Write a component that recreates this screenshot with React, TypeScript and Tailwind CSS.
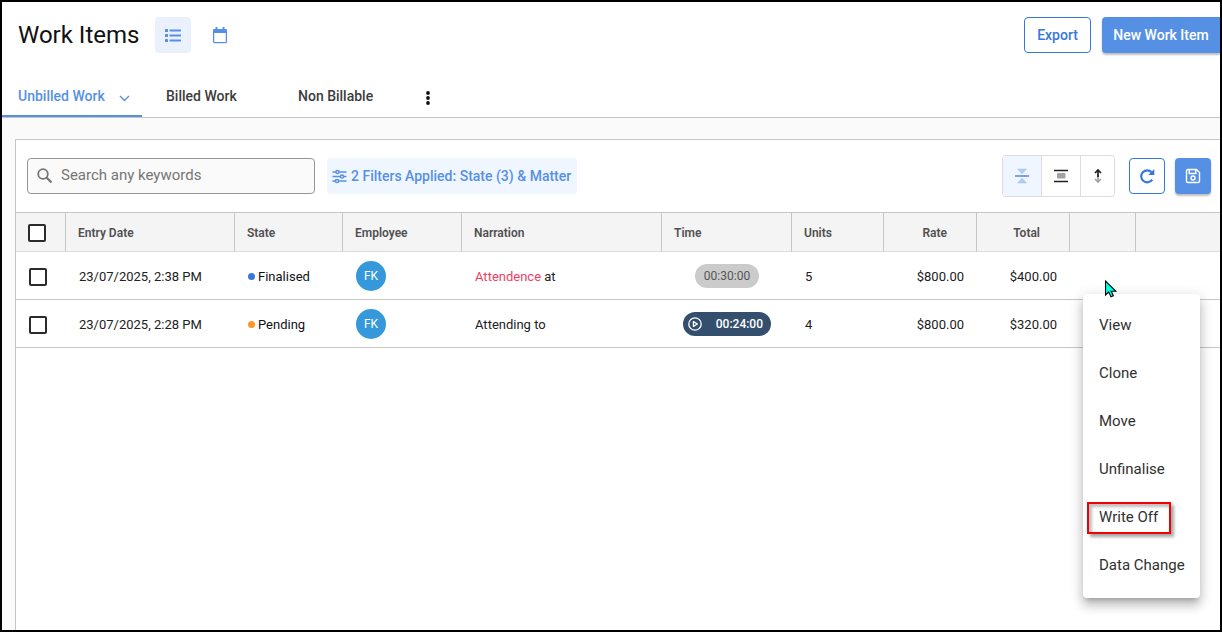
import type { ReactNode } from "react";

type WorkItem = {
  date: string;
  state: string;
  dot: string;
  employee: string;
  flagged?: string;
  narration: string;
  time: string;
  running: boolean;
  units: number;
  rate: string;
  total: string;
};

const workItems: WorkItem[] = [
  {
    date: "23/07/2025, 2:38 PM",
    state: "Finalised",
    dot: "bg-[#3778dc]",
    employee: "FK",
    flagged: "Attendence",
    narration: "at",
    time: "00:30:00",
    running: false,
    units: 5,
    rate: "$800.00",
    total: "$400.00",
  },
  {
    date: "23/07/2025, 2:28 PM",
    state: "Pending",
    dot: "bg-[#ff9720]",
    employee: "FK",
    narration: "Attending to",
    time: "00:24:00",
    running: true,
    units: 4,
    rate: "$800.00",
    total: "$320.00",
  },
];

const columns = [
  { label: "Entry Date", width: "w-[169px]", align: "pl-3 text-left" },
  { label: "State", width: "w-[108px]", align: "pl-3 text-left" },
  { label: "Employee", width: "w-[119px]", align: "pl-3 text-left" },
  { label: "Narration", width: "w-[200px]", align: "pl-3 text-left" },
  { label: "Time", width: "w-[130px]", align: "pl-3 text-left" },
  { label: "Units", width: "w-[92px]", align: "pl-3 text-left" },
  { label: "Rate", width: "w-[93px]", align: "pr-[29px] text-right" },
  { label: "Total", width: "w-[93px]", align: "pr-[29px] text-right" },
  { label: "", width: "w-[66px]", align: "" },
];

const menuItems = ["View", "Clone", "Move", "Unfinalise", "Write Off", "Data Change"];

function ListIcon() {
  return (
    <svg width="18" height="16" viewBox="0 0 18 16" fill="currentColor">
      <rect x="1" y="2" width="3" height="3" rx="0.5" />
      <rect x="1" y="7" width="3" height="3" rx="0.5" />
      <rect x="1" y="12" width="3" height="3" rx="0.5" />
      <rect x="5.5" y="2.6" width="11.5" height="1.9" rx="0.5" />
      <rect x="5.5" y="7.6" width="11.5" height="1.9" rx="0.5" />
      <rect x="5.5" y="12.6" width="11.5" height="1.9" rx="0.5" />
    </svg>
  );
}

function CalendarIcon() {
  return (
    <svg width="16" height="18" viewBox="0 0 16 18" fill="none" stroke="currentColor">
      <rect x="1.6" y="3.6" width="12.8" height="13" rx="1.2" strokeWidth="1.3" />
      <path d="M1 4.5A1.5 1.5 0 0 1 2.5 3h11A1.5 1.5 0 0 1 15 4.5V7H1z" fill="currentColor" stroke="none" />
      <path d="M4.5 1v3M11.5 1v3" strokeWidth="2" />
    </svg>
  );
}

function SearchIcon() {
  return (
    <svg width="16" height="16" viewBox="0 0 16 16" fill="none" stroke="#757575">
      <circle cx="6" cy="6" r="4.8" strokeWidth="1.8" />
      <path d="M9.5 9.5l5 5" strokeWidth="2.2" />
    </svg>
  );
}

function SlidersIcon() {
  return (
    <svg width="15" height="15" viewBox="0 0 15 15" fill="none" stroke="currentColor" strokeWidth="1.5">
      <path d="M0.5 3h3.3M7.2 3h7.3M0.5 7.5h7.8M11.7 7.5h2.8M0.5 12h2.8M6.7 12h7.8" />
      <circle cx="5.5" cy="3" r="1.6" />
      <circle cx="10" cy="7.5" r="1.6" />
      <circle cx="5" cy="12" r="1.6" />
    </svg>
  );
}

function CompactIcon() {
  return (
    <svg width="16" height="16" viewBox="0 0 16 16">
      <path d="M3.5 1h9L8 6zM3.5 15h9L8 10z" fill="#b0cbf3" stroke="#b0cbf3" strokeWidth="0.6" />
      <path d="M1 8h14" stroke="#4f8be0" strokeWidth="1.6" />
    </svg>
  );
}

function MediumIcon() {
  return (
    <svg width="16" height="16" viewBox="0 0 16 16">
      <path d="M1 2.5h14M1 13.5h14" stroke="#212121" strokeWidth="1.6" />
      <rect x="4" y="5" width="8.5" height="5.5" rx="1" fill="#a3a3a3" />
    </svg>
  );
}

function ExpandIcon() {
  return (
    <svg width="10" height="16" viewBox="0 0 10 16" fill="none" strokeWidth="1.7">
      <path d="M5 7v7M2 11l3 3 3-3" stroke="#a3a3a3" />
      <path d="M5 9V2M2 5l3-3 3 3" stroke="#212121" />
    </svg>
  );
}

function RefreshIcon() {
  return (
    <svg width="16" height="16" viewBox="0 0 16 16">
      <path d="M12.6 4.2A6 6 0 1 0 13.2 11.6" fill="none" stroke="currentColor" strokeWidth="2.2" />
      <path d="M15.3 1v6H9.3z" fill="currentColor" />
    </svg>
  );
}

function SaveIcon() {
  return (
    <svg width="16" height="16" viewBox="0 0 16 16" fill="none" stroke="currentColor" strokeWidth="1.4">
      <path d="M2.8 1.5h8.7l3 3v8.7a1.3 1.3 0 0 1-1.3 1.3H2.8a1.3 1.3 0 0 1-1.3-1.3V2.8a1.3 1.3 0 0 1 1.3-1.3z" />
      <path d="M4.2 1.8v3.7h6.6V1.8" />
      <circle cx="8" cy="10" r="2" />
    </svg>
  );
}

function PlayIcon() {
  return (
    <svg width="14" height="14" viewBox="0 0 14 14" fill="none" stroke="currentColor">
      <circle cx="7" cy="7" r="6.2" strokeWidth="1.3" />
      <path d="M5.4 4.6v4.8L9.4 7z" strokeWidth="1.3" strokeLinejoin="round" />
    </svg>
  );
}

function CursorIcon() {
  return (
    <svg width="13" height="18" viewBox="0 0 13 18">
      <path
        d="M0.5 1v14l3.2-3 2.3 4.8 2.4-1-2.2-4.6h4.6z"
        fill="#00ffe6"
        stroke="#000"
        strokeWidth="1.1"
      />
    </svg>
  );
}

function Checkbox({ label }: { label: string }) {
  return (
    <input
      type="checkbox"
      aria-label={label}
      className="block size-[18px] appearance-none rounded-xs border-2 border-[#2b2b2b] bg-white"
    />
  );
}

function Tab({ children }: { children: ReactNode }) {
  return (
    <button className="h-full w-[132px] pb-0.5 pl-6 text-left text-[#3c3c3c]">{children}</button>
  );
}

function TimePill({ item }: { item: WorkItem }) {
  if (!item.running) {
    return (
      <span className="flex h-6 w-16 items-center justify-center rounded-full bg-[#cbcbcb] text-[#555555]">
        {item.time}
      </span>
    );
  }
  return (
    <span className="flex h-6 w-[88px] items-center justify-between rounded-full bg-[#344f6e] pr-2 pl-[5px] font-medium text-white">
      <button aria-label="Start timer">
        <PlayIcon />
      </button>
      {item.time}
    </span>
  );
}

function Toolbar() {
  return (
    <div className="flex h-[72px] items-center pr-[9px] pl-[11px]">
      <label className="flex h-9 w-72 items-center gap-2 rounded-sm border border-[#949494] bg-[#fafafa] px-[9px]">
        <SearchIcon />
        <input
          type="text"
          aria-label="Search any keywords"
          placeholder="Search any keywords"
          className="min-w-0 flex-1 bg-transparent pb-0.5 text-[15px] outline-none placeholder:text-[#757575]"
        />
      </label>
      <button className="ml-3 flex h-9 w-[250px] items-center gap-1 rounded-sm bg-[#f0f6ff] pl-[5px] text-sm font-medium whitespace-nowrap text-[#5690e5]">
        <SlidersIcon />
        2 Filters Applied: State (3) &amp; Matter
      </button>

      <div className="ml-auto flex h-[42px] divide-x divide-[#dddddd] overflow-hidden rounded-sm border border-[#dddddd]">
        <button aria-label="Compact rows" className="flex w-[39px] items-center justify-center bg-[#f0f6ff]">
          <CompactIcon />
        </button>
        <button aria-label="Medium rows" className="flex w-[39px] items-center justify-center">
          <MediumIcon />
        </button>
        <button aria-label="Expanded rows" className="flex w-[33px] items-center justify-center">
          <ExpandIcon />
        </button>
      </div>
      <button
        aria-label="Refresh"
        className="ml-3.5 flex size-9 items-center justify-center rounded-sm border border-[#3578dc] text-[#3578dc]"
      >
        <RefreshIcon />
      </button>
      <button
        aria-label="Save view"
        className="ml-2.5 flex size-9 items-center justify-center rounded-sm bg-[#5690e5] text-white shadow-[0_2px_2px_rgba(0,0,0,0.25)]"
      >
        <SaveIcon />
      </button>
    </div>
  );
}

function WorkTable() {
  return (
    <table className="w-full table-fixed border-separate border-spacing-0 text-[13px] text-[#212121]">
      <thead>
        <tr className="h-10 bg-[#f4f4f4] text-xs text-[#505050]">
          <th className="w-[50px] border-t border-r border-b border-t-[#c6c6c6] border-r-[#c6c6c6] border-b-[#dddddd] pt-0.5 pr-0 pb-0 pl-3">
            <Checkbox label="Select all" />
          </th>
          {columns.map((col, i) => (
            <th
              key={i}
              className={`border-t border-r border-b border-t-[#c6c6c6] border-r-[#c6c6c6] border-b-[#dddddd] pt-0.5 pb-0 font-semibold ${col.width} ${col.align}`}
            >
              {col.label}
            </th>
          ))}
          <th className="border-t border-b border-t-[#c6c6c6] border-b-[#dddddd] p-0" />
        </tr>
      </thead>
      <tbody className="[&_td]:border-b [&_td]:border-[#c6c6c6] [&_td]:pb-0">
        {workItems.map((item) => (
          <tr key={item.date} className="h-12">
            <td className="pt-0.5 pl-[13px]">
              <Checkbox label={`Select ${item.date}`} />
            </td>
            <td className="pt-0.5 pl-[13px]">{item.date}</td>
            <td className="pt-0.5 pl-[13px]">
              <span className="flex items-center gap-[3px] text-[#111111]">
                <span className={`size-[7px] rounded-full ${item.dot}`} />
                {item.state}
              </span>
            </td>
            <td className="pl-[13px]">
              <span className="flex size-[30px] items-center justify-center rounded-full bg-[#3498db] text-xs text-white">
                {item.employee}
              </span>
            </td>
            <td className="pt-0.5 pl-[13px]">
              {item.flagged && <span className="text-[#f03e63]">{item.flagged} </span>}
              {item.narration}
            </td>
            <td>
              <div className="flex justify-center text-xs">
                <TimePill item={item} />
              </div>
            </td>
            <td className="pt-0.5 pl-[13px]">{item.units}</td>
            <td className="pt-0.5 pr-[13px] text-right">{item.rate}</td>
            <td className="pt-0.5 pr-[13px] text-right">{item.total}</td>
            <td />
            <td />
          </tr>
        ))}
      </tbody>
    </table>
  );
}

function RowMenu() {
  return (
    <ul className="absolute top-[82px] right-5 w-[117px] rounded-sm bg-white py-2 text-[15px] text-[#303030] shadow-[0_5px_5px_-3px_rgba(0,0,0,0.2),0_8px_10px_1px_rgba(0,0,0,0.14),0_3px_14px_2px_rgba(0,0,0,0.12)]">
      {menuItems.map((label) => (
        <li key={label} className="relative">
          <button className="h-12 w-full px-4 pb-0.5 text-left whitespace-nowrap">{label}</button>
          {label === "Write Off" && (
            <span className="pointer-events-none absolute top-2 left-1 h-8 w-[84px] border-2 border-[#f40000] shadow-[3px_3px_3px_rgba(0,0,0,0.35),inset_3px_3px_3px_rgba(0,0,0,0.25)]" />
          )}
        </li>
      ))}
    </ul>
  );
}

export default function App() {
  return (
    <div className="flex min-h-screen flex-col overflow-hidden border-2 border-black bg-[#fafafa] font-['Roboto',sans-serif]">
      <header className="flex items-center bg-white pt-[15px] pb-[23px] pl-4">
        <h1 className="text-2xl leading-9 text-[#111111]">Work Items</h1>
        <button
          aria-label="List view"
          className="ml-4 flex size-9 items-center justify-center rounded-sm bg-[#eaf1fc] text-[#5690e5]"
        >
          <ListIcon />
        </button>
        <button
          aria-label="Calendar view"
          className="ml-[11px] flex size-9 items-center justify-center text-[#5690e5]"
        >
          <CalendarIcon />
        </button>
        <button className="ml-auto h-9 w-[67px] rounded-sm border border-[#3578dc] text-sm font-medium text-[#3578dc]">
          Export
        </button>
        <button className="ml-[11px] h-9 w-[118px] rounded-l-sm bg-[#5690e5] text-sm font-medium whitespace-nowrap text-white shadow-[0_2px_2px_rgba(0,0,0,0.25)]">
          New Work Item
        </button>
      </header>

      <nav className="flex h-[42px] border-b border-[#c6c6c6] bg-white text-sm font-medium">
        <button className="flex w-[140px] items-center gap-3.5 border-b-2 border-[#5690e5] pl-4 text-[#5690e5]">
          Unbilled Work
          <svg width="11" height="8" viewBox="0 0 11 8" fill="none" stroke="currentColor" strokeWidth="1.4" className="mt-1">
            <path d="M1 2l4.5 4.5L10 2" />
          </svg>
        </button>
        <Tab>Billed Work</Tab>
        <Tab>Non Billable</Tab>
        <button aria-label="More tabs" className="flex w-11 items-center justify-center pt-0.5">
          <svg width="4" height="14" viewBox="0 0 4 14" fill="#111111">
            <circle cx="2" cy="2" r="1.9" />
            <circle cx="2" cy="7" r="1.9" />
            <circle cx="2" cy="12" r="1.9" />
          </svg>
        </button>
      </nav>

      <main className="mt-[21px] ml-[13px] flex-1 border-t border-l border-[#c6c6c6] bg-white">
        <Toolbar />
        <div className="relative">
          <WorkTable />
          <RowMenu />
          <span className="pointer-events-none absolute top-[68px] right-[102px]">
            <CursorIcon />
          </span>
        </div>
      </main>
    </div>
  );
}
